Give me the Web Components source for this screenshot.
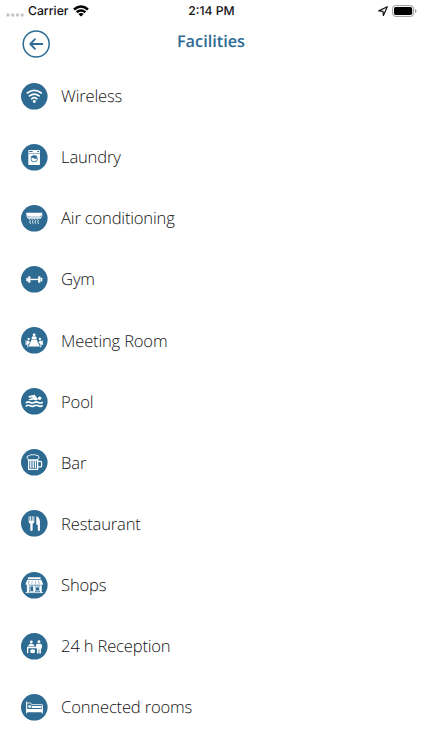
<!DOCTYPE html>
<html lang="en">
<head>
<meta charset="utf-8">
<meta name="viewport" content="width=device-width, initial-scale=1">
<title>Facilities</title>
<style>
  html, body { margin: 0; height: 100%; background: #fff; overflow: hidden; }
  body { --brand: #2d6b93; font-family: "Open Sans", sans-serif; color: #111; text-rendering: geometricPrecision; }
</style>
</head>
<body>
<facilities-screen>
  <status-bar slot="status" carrier="Carrier" time="2:14 PM"></status-bar>
  <nav-header slot="header">Facilities</nav-header>
  <facility-row icon="wifi">Wireless</facility-row>
  <facility-row icon="laundry">Laundry</facility-row>
  <facility-row icon="air">Air conditioning</facility-row>
  <facility-row icon="gym">Gym</facility-row>
  <facility-row icon="meeting">Meeting Room</facility-row>
  <facility-row icon="pool">Pool</facility-row>
  <facility-row icon="bar">Bar</facility-row>
  <facility-row icon="restaurant">Restaurant</facility-row>
  <facility-row icon="shops">Shops</facility-row>
  <facility-row icon="reception">24 h Reception</facility-row>
  <facility-row icon="bed">Connected rooms</facility-row>
</facilities-screen>

<script>
// Icon bodies, drawn on an 80 x 80 disc centred on 60,60.
// Class "l" is a stroked line, "b" fills with the brand colour.
const ICONS = {
  wifi: `
    <path class="l" stroke-width="5" d="M39 50Q60 34 81 50M45.500 59Q60 47.500 74.500 59M52 67.500Q60 60.500 68 67.500"/>
    <circle cx="60" cy="75.500" r="4.500"/>`,
  laundry: `
    <rect x="42" y="38" width="35" height="45" rx="2"/>
    <path class="b" d="M45 41h10v3H45zM69 41h5v3h-5zM42 47.500h35v1.600H42z"/>
    <circle class="b" cx="59.500" cy="64.500" r="10.500"/>
    <circle cx="59.500" cy="64.500" r="8.200"/>
    <path class="b" d="M51 63q4-4 8.500 0t8.500-1q0-6-8.500-6.500T51 63z"/>`,
  air: `
    <path d="M36 43h48v10l-5 8H41l-5-8z"/>
    <path class="b" d="M37 52.500h4l2 2.500h34l2-2.500h4v1.500h-3l-2 3H42l-2-3h-3z"/>
    <path class="l" stroke-width="2.800" d="M46 64q4 3 1 6t2 6M54 64q4 3 1 6t2 6M62 64q4 3 1 6t2 6M70 64q4 3 1 6t2 6"/>`,
  gym: `
    <rect x="41.500" y="50.500" width="7" height="20" rx="2"/>
    <rect x="71.500" y="50.500" width="7" height="20" rx="2"/>
    <rect x="36" y="55" width="5" height="11.500" rx="2"/>
    <rect x="79" y="55" width="5" height="11.500" rx="2"/>
    <path d="M48 58.500h24v4H48z"/>`,
  meeting: `
    <circle cx="59.500" cy="43.500" r="4.300"/>
    <path d="M52 56v-4q0-4.500 7.500-4.500T67 52v4zM52 57.500h15l10 21.500H43z"/>
    <circle cx="43" cy="56" r="3.500"/><circle cx="77" cy="56" r="3.500"/>
    <path d="M38 61h6l3 6-5 5v9h-3v-8h-4zM82 61h-6l-3 6 5 5v9h3v-8h4z"/>
    <path class="l" stroke-width="2.500" d="M35 61v12M85 61v12"/>`,
  pool: `
    <path d="M43 44l18-4 10 14q-4 4-8 2.500t-9-1q-6 3-12 0l15-8-14 1.500z"/>
    <circle cx="76" cy="51" r="5.300"/>
    <path class="l" stroke-width="4.800" d="M36 64q6-4 12-.5t12 0 12 0 12 0M36 74q6-4 12-.5t12 0 12 0 12 0"/>`,
  bar: `
    <path class="l" stroke-width="2.800" d="M42 54v-4q-5-1-4-6t8-4q3-5 9-2 6-4 10 1 8-2 9 5 1 5-4 6v4z"/>
    <path class="l" stroke-width="3.800" d="M43 53v28h27V53zM71 57h8q3 0 3 3v11q0 3-3 3h-8"/>
    <path d="M47.500 57h4v20h-4zM54.500 57h4v20h-4zM61.500 57h4v20h-4z"/>`,
  restaurant: `
    <path d="M43 39h2.500v13h2.300V39h2.500v13h2.300V39h2.500v13h2.300V39H60v17q0 4-5 5v19q0 3-3.500 3T48 80V61Q43 60 43 56z"/>
    <path d="M66 39q10 2 11 16v25q0 3-3 3t-3.500-3V64H66z"/>`,
  shops: `
    <path d="M41 36h38v5H41zM39 43h42l5 12v3H34v-3z"/>
    <path class="l" stroke-width="2.500" d="M39 58v24M81 58v24M35 82h50M41 62h38M47 62v17h11V62M64 65h12v12H64z"/>
    <path d="M39 59h5v22h-5zM58 63h4v17h-4zM77 61h4v20h-4z"/>
    <path class="b" d="M44 46h1.500l-2 9h-1.500zM53 46h1.300l-1 9H52zM62 46h1.300l1 9H63zM72 46h1.500l2 9H74z"/>`,
  reception: `
    <circle cx="51" cy="47" r="4.300"/>
    <path d="M42 60v-3q2-5 9-5t9 5v3zM38 61.500h27v4.500H42v15h-4z"/>
    <path d="M48 71q7-4 14 0v8q-7 4-14 0z"/>
    <circle cx="74" cy="46" r="4.300"/>
    <path d="M68 52h12l3 5v10h-3v15h-5V69h-2v13h-5V67h-3V56z"/>`,
  bed: `
    <path class="l" stroke-width="3.500" d="M37 44v33M37 73h47M84 57v20"/>
    <path class="l" stroke-width="2.500" d="M38 47h11l3 5h32v8"/>
    <circle cx="46" cy="57.500" r="4.300"/>
    <path d="M52 56h29v6H52zM38 65h46v8H38z"/>`
};

class FacilityIcon extends HTMLElement {
  constructor() {
    super();
    this.attachShadow({ mode: 'open' });
  }

  connectedCallback() {
    this.shadowRoot.innerHTML = `
      <style>
        :host { display: block; width: 26.600px; height: 26.600px; flex: none; }
        svg { display: block; width: 100%; height: 100%; fill: #fff; overflow: visible; }
        .b { fill: var(--brand); }
        .l { fill: none; stroke: #fff; stroke-linecap: round; stroke-linejoin: round; }
      </style>
      <svg viewBox="20 20 80 80" aria-hidden="true">
        <circle class="b" cx="60" cy="60" r="40"/>
        ${ICONS[this.getAttribute('name')] || ''}
      </svg>
    `;
  }
}

class FacilityRow extends HTMLElement {
  constructor() {
    super();
    this.attachShadow({ mode: 'open' });
  }

  connectedCallback() {
    this.shadowRoot.innerHTML = `
      <style>
        :host {
          display: flex;
          align-items: center;
          gap: 14px;
          height: 61.100px;
          padding-left: 20.500px;
          font-size: 16.600px;
          font-weight: 300;
          letter-spacing: -0.190px;
          line-height: 24px;
          white-space: nowrap;
        }
        span { padding-top: 0.300px; }
      </style>
      <facility-icon name="${this.getAttribute('icon')}"></facility-icon>
      <span><slot></slot></span>
    `;
  }
}

class StatusBar extends HTMLElement {
  constructor() {
    super();
    this.attachShadow({ mode: 'open' });
  }

  connectedCallback() {
    this.shadowRoot.innerHTML = `
      <style>
        :host {
          display: grid;
          grid-template-columns: 1fr auto 1fr;
          align-items: center;
          height: 20px;
          padding: 0 5px 0 6px;
          box-sizing: border-box;
          font: 500 12.200px/20px Inter, sans-serif;
          color: #111;
        }
        div { display: flex; align-items: center; }
        span { padding-top: 1px; }
        .right { justify-content: flex-end; gap: 4.500px; }
        .dots { margin: 8px 4px 0 0; }
        .wifi { margin-left: 4.500px; }
        svg { display: block; }
      </style>
      <div>
        <svg class="dots" width="18" height="4" fill="#c4c4c4">
          <circle cx="2" cy="2" r="1.700"/><circle cx="6.700" cy="2" r="1.700"/>
          <circle cx="11.400" cy="2" r="1.700"/><circle cx="16.100" cy="2" r="1.700"/>
        </svg>
        <span>${this.getAttribute('carrier')}</span>
        <svg class="wifi" width="16" height="12" viewBox="0 0 16 12" fill="none" stroke="#000" stroke-width="2.500">
          <path d="M1 4.500Q8-1.500 15 4.500M3.700 7.300Q8 3.700 12.300 7.300"/>
          <path fill="#000" stroke="none" d="M5.300 8.900Q8 6.900 10.700 8.900L8 11.600z"/>
        </svg>
      </div>
      <span>${this.getAttribute('time')}</span>
      <div class="right">
        <svg width="10" height="10" viewBox="0 0 10 10" fill="none" stroke="#111" stroke-width="1.200" stroke-linejoin="round">
          <path d="M9.300.8L.8 4.900l4.200.5.400 4.100z"/>
        </svg>
        <svg width="25" height="12" viewBox="0 0 25 12">
          <rect x=".6" y=".6" width="21" height="10.800" rx="3" fill="none" stroke="#999"/>
          <rect x="2" y="2" width="18.200" height="8" rx="1.700"/>
          <path d="M23 4q1.500.6 1.500 2T23 8z" fill="#999"/>
        </svg>
      </div>
    `;
  }
}

class NavHeader extends HTMLElement {
  constructor() {
    super();
    this.attachShadow({ mode: 'open' });
  }

  connectedCallback() {
    this.shadowRoot.innerHTML = `
      <style>
        :host {
          display: grid;
          grid-template-columns: 1fr auto 1fr;
          height: 45.500px;
          padding: 0 22px;
          box-sizing: border-box;
          color: var(--brand);
        }
        button { display: block; width: 28px; height: 28px; margin: 9.500px 0 0; padding: 0; border: 0; background: none; color: inherit; }
        svg { display: block; }
        h1 { margin: 9px 0 0; font-size: 16.300px; font-weight: 600; line-height: 24px; }
      </style>
      <button aria-label="Back">
        <svg width="28" height="28" viewBox="0 0 28 28" fill="none" stroke="currentColor" stroke-width="1.500" stroke-linecap="round" stroke-linejoin="round">
          <circle cx="14.200" cy="14" r="13"/>
          <path stroke-width="1.800" d="M20.300 14H8.500M13 9.200L8.300 14l4.700 4.800"/>
        </svg>
      </button>
      <h1><slot></slot></h1>
    `;
  }
}

class FacilitiesScreen extends HTMLElement {
  constructor() {
    super();
    this.attachShadow({ mode: 'open' });
  }

  connectedCallback() {
    this.shadowRoot.innerHTML = `
      <style>
        :host { display: flex; flex-direction: column; height: 100vh; overflow: hidden; }
        main { flex: 1; min-height: 0; }
      </style>
      <slot name="status"></slot>
      <slot name="header"></slot>
      <main><slot></slot></main>
    `;
  }
}

customElements.define('facility-icon', FacilityIcon);
customElements.define('facility-row', FacilityRow);
customElements.define('status-bar', StatusBar);
customElements.define('nav-header', NavHeader);
customElements.define('facilities-screen', FacilitiesScreen);
</script>
</body>
</html>
